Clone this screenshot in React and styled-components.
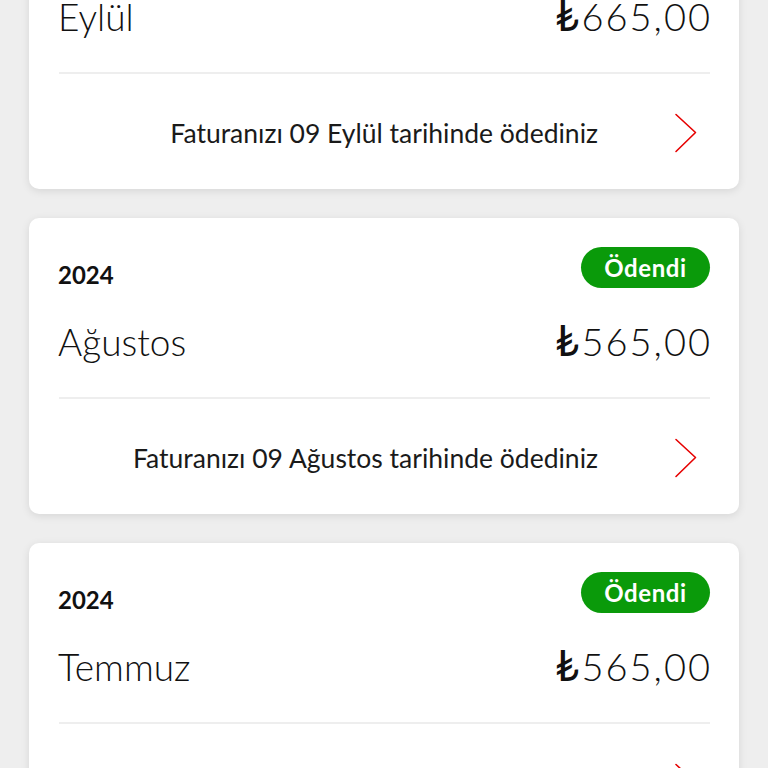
import React from 'react'
import styled, { createGlobalStyle } from 'styled-components'

const GlobalStyle = createGlobalStyle`
    html, body {
        margin: 0;
        padding: 0;
        background-color: #eeeeee;
        font-family: Lato, "Open Sans", "Liberation Sans", sans-serif;
        color: #111;
    }
`

const bills = [
    { year: '2024', month: 'Eylül', amount: '665,00', paidOn: '09 Eylül' },
    { year: '2024', month: 'Ağustos', amount: '565,00', paidOn: '09 Ağustos' },
    { year: '2024', month: 'Temmuz', amount: '565,00', paidOn: '09 Temmuz' },
]

const Chevron = () => (
    <svg width="24" height="40" viewBox="0 0 24 40" fill="none">
        <path d="M2 1.5 L21.5 19.5 L2 38.5" stroke="#e60000" strokeWidth="1.6" strokeLinecap="round" strokeLinejoin="round" />
    </svg>
)

const BillCard = ({ bill }) => (
    <Card>
        <Header>
            <Year>{bill.year}</Year>
            <Badge>Ödendi</Badge>
        </Header>
        <AmountRow>
            <Month>{bill.month}</Month>
            <Amount><Lira>₺</Lira>{bill.amount}</Amount>
        </AmountRow>
        <Divider />
        <Footer>
            <FooterText>Faturanızı {bill.paidOn} tarihinde ödediniz</FooterText>
            <ChevronBox><Chevron /></ChevronBox>
        </Footer>
    </Card>
)

const App = () => (
    <>
        <GlobalStyle />
        <Viewport>
            <List>
                {bills.map((bill) => (
                    <BillCard key={bill.month} bill={bill} />
                ))}
            </List>
        </Viewport>
    </>
)

const Viewport = styled.div`
    height: 768px;
    overflow: hidden;
`

const List = styled.div`
    display: flex;
    flex-direction: column;
    gap: 29px;
    padding: 0 29px;
    margin-top: -107px;
`

const Card = styled.div`
    background-color: #fff;
    border-radius: 10px;
    box-shadow: 0 2px 8px rgba(0, 0, 0, 0.1);
    padding: 29px 29px 0 29px;
    height: 296px;
    box-sizing: border-box;
    display: flex;
    flex-direction: column;
`

const Header = styled.div`
    display: flex;
    justify-content: space-between;
    align-items: flex-end;
    height: 41px;
`

const Year = styled.span`
    font-size: 24px;
    font-weight: 700;
    line-height: 24px;
    margin-bottom: 1px;
`

const Badge = styled.span`
    display: flex;
    align-items: center;
    justify-content: center;
    width: 129px;
    height: 41px;
    border-radius: 21px;
    background-color: #0a9a0a;
    color: #fff;
    font-size: 24px;
    font-weight: 700;
    letter-spacing: 0.6px;
`

const AmountRow = styled.div`
    display: flex;
    justify-content: space-between;
    align-items: baseline;
    margin-top: 30px;
`

const Month = styled.span`
    font-size: 37px;
    font-weight: 300;
    line-height: 44px;
`

const Amount = styled.span`
    font-size: 38px;
    font-weight: 300;
    line-height: 44px;
    letter-spacing: 2px;
    margin-right: -2px;
`

const Lira = styled.span`
    font-weight: 400;
    font-size: 42px;
    letter-spacing: 0;
    margin-right: 2px;
`

const Divider = styled.div`
    height: 2px;
    background-color: #eeeeee;
    margin-top: 33px;
    margin-left: 1px;
`

const Footer = styled.div`
    flex: 1;
    display: flex;
    align-items: center;
    justify-content: flex-end;
    padding-top: 2px;
`

const FooterText = styled.span`
    font-size: 26.5px;
    font-weight: 400;
    color: #1a1a1a;
`

const ChevronBox = styled.span`
    display: flex;
    margin-left: 76px;
    margin-right: 12px;
`

export default App
